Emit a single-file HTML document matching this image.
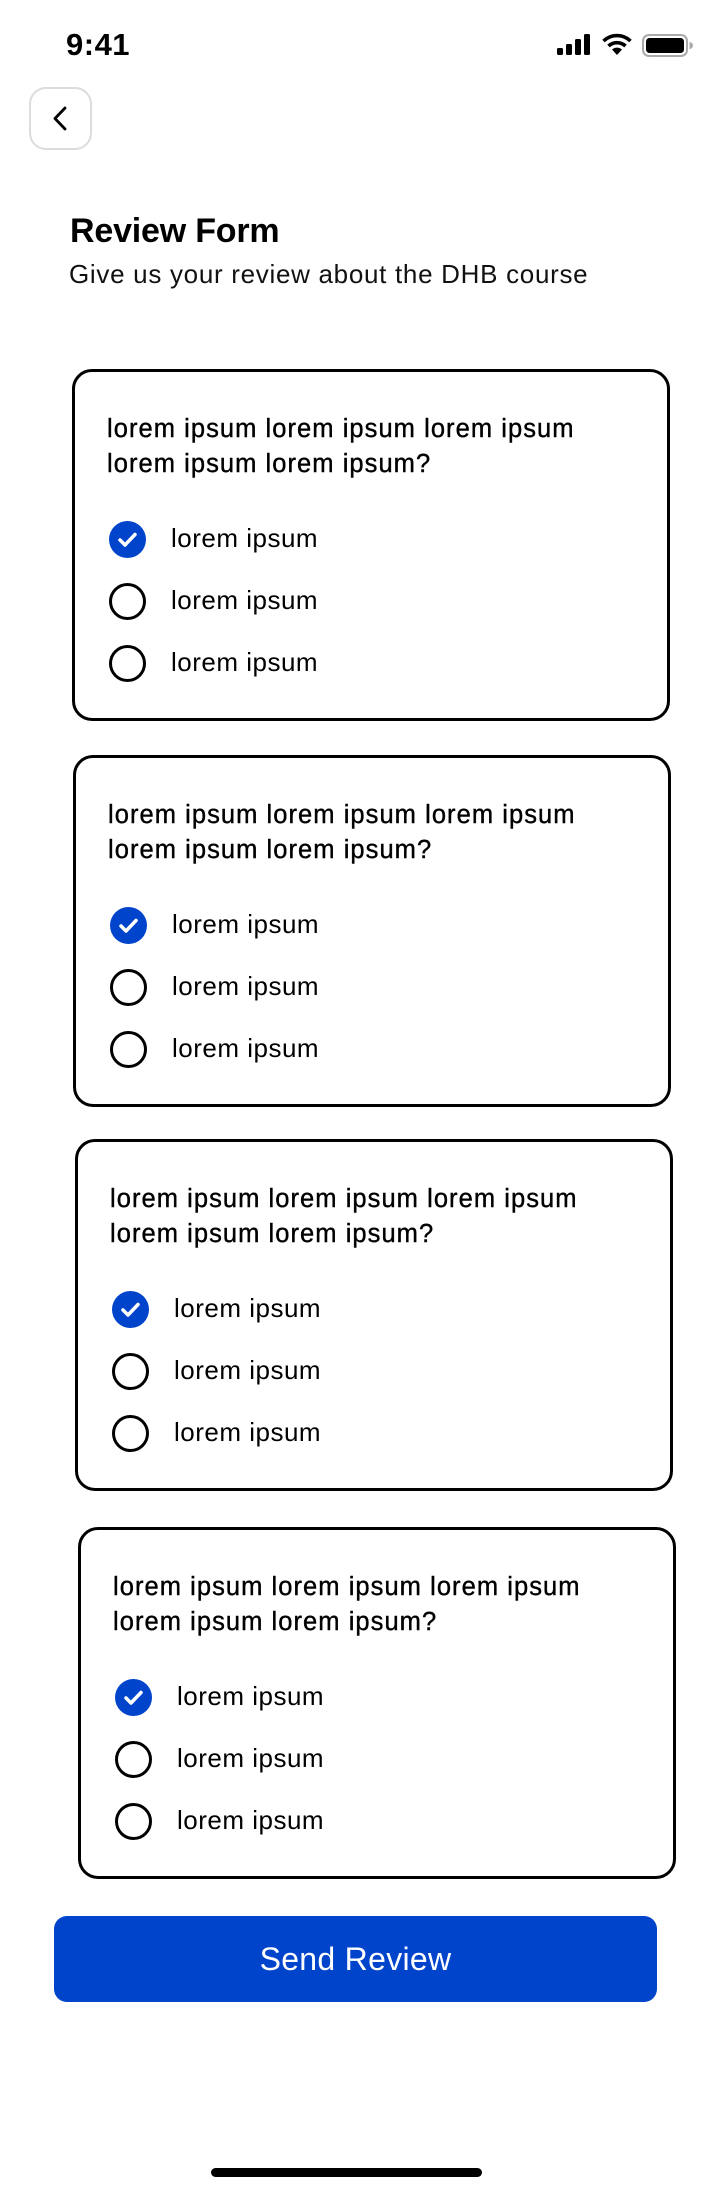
<!DOCTYPE html>
<html><head><meta charset="utf-8"><style>
*{margin:0;padding:0;box-sizing:border-box}
body{width:720px;height:2188px;background:#fff;position:relative;font-family:"Liberation Sans",Arial,sans-serif;color:#000;overflow:hidden}
.a{position:absolute}
.time{left:66px;top:27px;font-size:31px;font-weight:bold;letter-spacing:0.5px}
.back{left:29px;top:87px;width:63px;height:63px;border:2px solid #dcdcdc;border-radius:17px}
.title{left:70px;top:212px;font-size:34px;font-weight:bold;letter-spacing:-0.2px}
.sub{left:69px;top:259px;font-size:26px;letter-spacing:0.7px;color:#111}
.card{position:absolute;width:598px;height:352px;border:3.5px solid #000;border-radius:20px}
.q{position:absolute;font-size:25.5px;line-height:35px;letter-spacing:1.05px;color:#000;-webkit-text-stroke:0.4px #000;white-space:nowrap}
.opt{position:absolute;width:37px;height:37px;border-radius:50%;border:3.5px solid #000}
.opt.on{border:none;background:#0044cc}
.lab{position:absolute;font-size:26px;letter-spacing:0.5px}
.btn{left:54px;top:1916px;width:603px;height:86px;background:#0044cc;border-radius:13px;color:#fff;font-size:32px;text-align:center;line-height:86px;letter-spacing:0.3px}
.home{left:211px;top:2168px;width:271px;height:9px;background:#000;border-radius:5px}
</style></head><body>
<div class="a time">9:41</div>
<svg class="a" style="left:556px;top:33px" width="140" height="26" viewBox="0 0 140 26">
<rect x="1" y="15" width="6" height="7" rx="1.5"/>
<rect x="10" y="11" width="6" height="11" rx="1.5"/>
<rect x="19" y="6" width="6" height="16" rx="1.5"/>
<rect x="28" y="1" width="6" height="21" rx="1.5"/>
<path d="M61 22 L56 16.5 A7.5 7.5 0 0 1 66 16.5 Z"/>
<path d="M52.5 13 A12.5 12.5 0 0 1 69.5 13" stroke="#000" stroke-width="3.6" fill="none"/>
<path d="M47.5 8 A19.5 19.5 0 0 1 74.5 8" stroke="#000" stroke-width="3.6" fill="none"/>
<rect x="87" y="2" width="44" height="21" rx="6" fill="none" stroke="#aaa" stroke-width="2"/>
<rect x="90" y="5" width="38" height="15" rx="3.5"/>
<path d="M133.5 9 v7 a3.5 3.5 0 0 0 0 -7z" fill="#aaa"/>
</svg>
<div class="a back"><svg width="59" height="59" viewBox="0 0 59 59" style="position:absolute;left:0;top:0"><path d="M34 19 L24 29.5 L34 40" stroke="#000" stroke-width="2.8" fill="none" stroke-linecap="round" stroke-linejoin="round"/></svg></div>
<div class="a title">Review Form</div>
<div class="a sub">Give us your review about the DHB course</div>

<div class="card" style="left:72px;top:369px"></div>
<div class="card" style="left:73px;top:755px"></div>
<div class="card" style="left:75px;top:1139px"></div>
<div class="card" style="left:78px;top:1527px"></div>

<div id="c"></div>
<script>
var tops=[369,755,1139,1527],lefts=[72,73,75,78],h='';
for(var i=0;i<4;i++){var L=lefts[i]+4,T=tops[i]+4;
h+='<div class="q" style="left:'+(L+31)+'px;top:'+(T+39)+'px">lorem ipsum lorem ipsum lorem ipsum<br>lorem ipsum lorem ipsum?</div>';
for(var j=0;j<3;j++){var cy=T+166+62*j;
if(j==0)h+='<div class="opt on" style="left:'+(L+33)+'px;top:'+(cy-18)+'px"><svg width="37" height="37" viewBox="0 0 37 37"><path d="M11 19 L16 24 L26 13.5" stroke="#fff" stroke-width="3.5" fill="none" stroke-linecap="round" stroke-linejoin="round"/></svg></div>';
else h+='<div class="opt" style="left:'+(L+33)+'px;top:'+(cy-18)+'px"></div>';
h+='<div class="lab" style="left:'+(L+95)+'px;top:'+(cy-16)+'px">lorem ipsum</div>';}}
document.getElementById('c').innerHTML=h;
</script>

<div class="a btn">Send Review</div>
<div class="a home"></div>
</body></html>
